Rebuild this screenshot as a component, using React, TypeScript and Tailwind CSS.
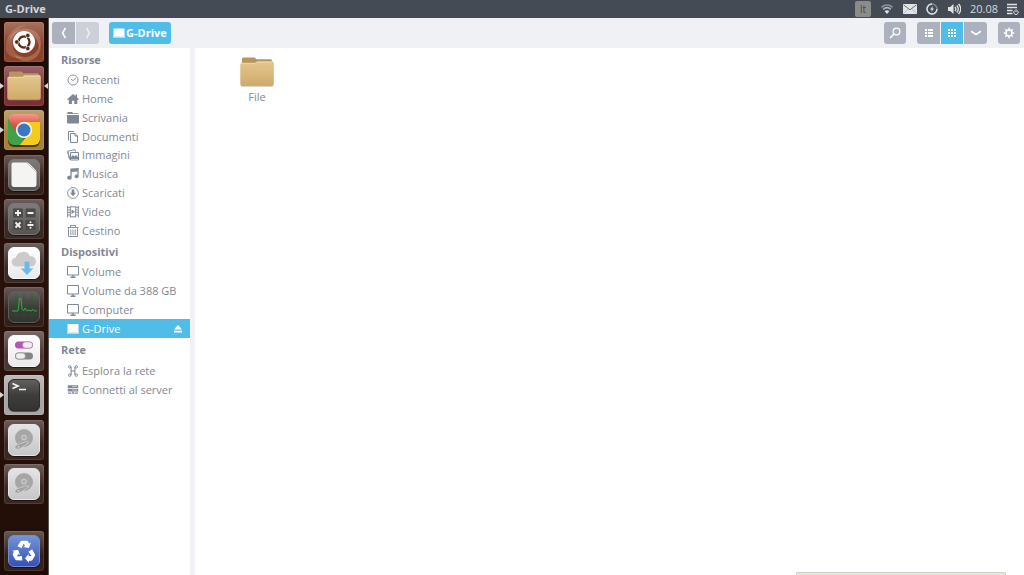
import { useState } from 'react';
import type { ReactNode } from 'react';

interface LauncherItem {
  label: string;
  tile: string;
  icon: ReactNode;
  running?: boolean;
  focused?: boolean;
}

interface Place {
  label: string;
  icon: ReactNode;
  ejectable?: boolean;
}

/* ---------- Shared drawings ---------- */

function Folder({ className }: { className?: string }) {
  return (
    <svg viewBox="0 0 36 32" className={className} aria-hidden="true">
      <defs>
        <linearGradient id="folder-front" x1="0" y1="0" x2="0" y2="1">
          <stop offset="0" stopColor="#e3c78f" />
          <stop offset="1" stopColor="#ceaa69" />
        </linearGradient>
      </defs>
      <path d="M3 30.500h30a2 2 0 0 0 1.500-1.500H1.500A2 2 0 0 0 3 30.500z" fill="#8d7b5c" opacity=".6" />
      <path d="M3 8V3.200C3 2 3.600 1.500 4.600 1.500h10.500c1 0 1.700.6 2 1.700h14.300c1 0 1.600.6 1.600 1.600V10H3z" fill="#b9955c" />
      <path d="M1.300 8.500c0-1.200.6-1.800 1.700-1.800h12.500c1.500 0 2-1.400 3.400-1.400H33c1.200 0 1.800.6 1.800 1.700v20.800c0 1.200-.7 1.900-1.900 1.900H3.200c-1.200 0-1.900-.7-1.900-1.900z" fill="url(#folder-front)" />
      <path d="M2 7.600h14.200c1.200 0 1.800-1.400 3-1.400H34" stroke="#f0dcae" strokeWidth=".7" fill="none" />
    </svg>
  );
}

function Plate({ fill, stroke = '#00000055' }: { fill: string; stroke?: string }) {
  return (
    <>
      <rect x="4" y="5" width="32" height="32" rx="6" fill="#000" opacity=".5" />
      <rect x="4.500" y="4.500" width="31" height="31" rx="5.500" fill={fill} stroke={stroke} />
    </>
  );
}

function LauncherSvg({ children }: { children: ReactNode }) {
  return (
    <svg viewBox="0 0 40 40" className="size-10" aria-hidden="true">
      {children}
    </svg>
  );
}

function LauncherGradients() {
  return (
    <svg className="absolute size-0" aria-hidden="true">
      <defs>
        <linearGradient id="plate-light" x1="0" y1="0" x2="0" y2="1">
          <stop offset="0" stopColor="#ffffff" />
          <stop offset="1" stopColor="#e9e9e9" />
        </linearGradient>
        <linearGradient id="plate-silver" x1="0" y1="0" x2="0" y2="1">
          <stop offset="0" stopColor="#e4e4e4" />
          <stop offset="1" stopColor="#c6c6c6" />
        </linearGradient>
        <linearGradient id="plate-gray" x1="0" y1="0" x2="0" y2="1">
          <stop offset="0" stopColor="#7d7c7b" />
          <stop offset="1" stopColor="#565554" />
        </linearGradient>
        <linearGradient id="plate-dark" x1="0" y1="0" x2="0" y2="1">
          <stop offset="0" stopColor="#62625f" />
          <stop offset=".5" stopColor="#3d3d3b" />
          <stop offset="1" stopColor="#333332" />
        </linearGradient>
        <linearGradient id="plate-blue" x1="0" y1="0" x2="0" y2="1">
          <stop offset="0" stopColor="#7397d8" />
          <stop offset="1" stopColor="#3550b4" />
        </linearGradient>
      </defs>
    </svg>
  );
}

function Disk() {
  return (
    <LauncherSvg>
      <Plate fill="url(#plate-silver)" stroke="#e6e6e6" />
      <circle cx="20" cy="18" r="9" fill="#a6a6a6" />
      <circle cx="20" cy="17.500" r="2.500" fill="#b0b0b0" stroke="#d0d0d0" />
      <path d="M11.500 26c2-2.500 6-2 9-3.800 1.800-.9 3.600-.8 4.500.5-3 1.300-7 5.300-10 6.300-3 .8-5-1-3.500-3z" fill="#a0a0a0" stroke="#d0d0d0" strokeWidth=".8" />
      <circle cx="14.500" cy="26.800" r="1" fill="#d0d0d0" />
    </LauncherSvg>
  );
}

const launcherItems: LauncherItem[] = [
  {
    label: 'Dash',
    tile: 'bg-[#8a4228]',
    icon: (
      <LauncherSvg>
        <g fill="#f0c6b4">
          <path d="M5 20C6 9 20 2 32 10c5 4 6 11 3 17 0-9-6-17-15-18-7 0-13 5-15 11z" opacity=".28" />
          <path d="M2 28C1 14 9 4 22 3 12 7 7 15 9 26c2 6 7 9 12 9-8 3-17 0-19-7z" opacity=".22" />
          <path d="M10 33c12 6 25 0 26-13 3 10-4 19-14 19-5 0-9-2-12-6z" opacity=".28" />
        </g>
        <circle cx="20" cy="20" r="11" fill="#fff" />
        <circle cx="20" cy="20" r="5.500" fill="none" stroke="#5b2a1b" strokeWidth="2.400" />
        <path d="M20 20 11.500 20M20 20l4.500-7.800M20 20l4.500 7.800" stroke="#fff" strokeWidth="1.200" />
        <circle cx="20" cy="20" r="4.200" fill="#fff" />
        <g fill="#5b2a1b" stroke="#fff" strokeWidth=".6">
          <circle cx="12.800" cy="20" r="2.200" />
          <circle cx="23.800" cy="13.500" r="2.200" />
          <circle cx="23.800" cy="26.500" r="2.200" />
        </g>
      </LauncherSvg>
    ),
  },
  {
    label: 'File',
    tile: 'bg-[#7a3038]',
    running: true,
    focused: true,
    icon: <Folder className="h-8 w-9" />,
  },
  {
    label: 'Google Chrome',
    tile: 'bg-[#a5823c]',
    running: true,
    icon: (
      <LauncherSvg>
        <defs>
          <clipPath id="chrome-clip">
            <rect x="4" y="4" width="32" height="31" rx="6" />
          </clipPath>
          <linearGradient id="chrome-red" x1="0" y1="0" x2="0" y2="1">
            <stop offset="0" stopColor="#f39a8c" />
            <stop offset=".5" stopColor="#e2564a" />
            <stop offset="1" stopColor="#d8382c" />
          </linearGradient>
        </defs>
        <rect x="4" y="5" width="32" height="32" rx="6" fill="#4b3514" />
        <g clipPath="url(#chrome-clip)">
          <path d="M4 4h32v9H20l-8 11L4 9z" fill="url(#chrome-red)" />
          <path d="M4 9l9 15 7 5-4 7H4z" fill="#3fa249" />
          <path d="M20 12h16v24H15l11-14z" fill="#f6cc1a" />
        </g>
        <circle cx="20" cy="20" r="8.200" fill="#f3f3ef" />
        <circle cx="20" cy="20" r="6.500" fill="#3b78c2" />
      </LauncherSvg>
    ),
  },
  {
    label: 'LibreOffice',
    tile: 'bg-[#35211c]',
    icon: (
      <LauncherSvg>
        <Plate fill="url(#plate-gray)" stroke="#7a7877" />
        <path d="M9.500 7.500h13c1 0 2 .5 2.600 1.100l6.500 6.500c.6.600.9 1.400.9 2.200v12.200c0 1.700-1 2.500-2.500 2.500H10c-1.500 0-2.500-1-2.500-2.500v-20c0-1.300.7-2 2-2z" fill="#f4f4f3" />
        <path d="M22.500 7.500l10 10z" stroke="#bbb" strokeWidth=".5" />
      </LauncherSvg>
    ),
  },
  {
    label: 'Calcolatrice',
    tile: 'bg-[#3b2b27]',
    icon: (
      <LauncherSvg>
        <Plate fill="url(#plate-gray)" stroke="#7a7877" />
        <g fill="#4c4b4a">
          <rect x="9" y="9.500" width="10" height="9" rx="1" />
          <rect x="21.500" y="9.500" width="10" height="9" rx="1" />
          <rect x="9" y="21" width="10" height="10" rx="1" />
          <rect x="21.500" y="21" width="10" height="10" rx="1" />
        </g>
        <g stroke="#f2f2f2" strokeWidth="1.800" fill="none">
          <path d="M11 14h6M14 11v6M23.500 14h6M11.500 23.500l5 5M16.500 23.500l-5 5M23.500 26h6" />
        </g>
        <circle cx="26.500" cy="23.200" r="1" fill="#f2f2f2" />
        <circle cx="26.500" cy="28.800" r="1" fill="#f2f2f2" />
      </LauncherSvg>
    ),
  },
  {
    label: 'Download',
    tile: 'bg-[#3b2b27]',
    icon: (
      <LauncherSvg>
        <Plate fill="url(#plate-light)" stroke="#f8f8f8" />
        <path d="M12.500 23.500a4.500 4.500 0 0 1-.6-9A7.500 7.500 0 0 1 26 13.300a5 5 0 0 1 5.900 5.200 4.600 4.600 0 0 1-4 5z" fill="#cbcbcb" />
        <path d="M20.500 18.500h5v7h3.500L23 32l-6-6.500h3.500z" fill="#70b8e8" stroke="#9bcdee" strokeWidth=".6" />
      </LauncherSvg>
    ),
  },
  {
    label: 'Monitor di sistema',
    tile: 'bg-[#35211c]',
    icon: (
      <LauncherSvg>
        <Plate fill="url(#plate-dark)" stroke="#5c5c59" />
        <path d="M6 14h28M6 20h28M6 28h28M12 6v28M20 6v28M28 6v28" stroke="#265a2b" strokeWidth=".4" />
        <path d="M8 24h6l1.500-12.500h1.500l1 11 2 1 1-2.500 2 3 2-1 2 1 2-1.500 2 1.500h2" fill="none" stroke="#3ca843" strokeWidth="1" />
      </LauncherSvg>
    ),
  },
  {
    label: 'Tweak Tool',
    tile: 'bg-[#4a3833]',
    icon: (
      <LauncherSvg>
        <Plate fill="url(#plate-light)" stroke="#f8f8f8" />
        <rect x="11" y="10.500" width="18" height="7" rx="3.500" fill="#b455b0" />
        <rect x="18.500" y="11" width="10" height="6" rx="3" fill="#f1eef1" stroke="#a87aa6" strokeWidth=".5" />
        <rect x="11" y="21.500" width="18" height="7" rx="3.500" fill="#858585" />
        <rect x="11.500" y="22" width="10" height="6" rx="3" fill="#eee" stroke="#777" strokeWidth=".5" />
      </LauncherSvg>
    ),
  },
  {
    label: 'Terminale',
    tile: 'bg-[#aaa5a5]',
    running: true,
    icon: (
      <LauncherSvg>
        <Plate fill="url(#plate-dark)" stroke="#2c2c2c" />
        <path d="M8.500 8.500l5.500 2.500-5.500 2.500M15 14.500h7" fill="none" stroke="#f4f4f4" strokeWidth="1.700" />
      </LauncherSvg>
    ),
  },
  { label: 'Disco 1', tile: 'bg-[#3b2723]', icon: <Disk /> },
  { label: 'Disco 2', tile: 'bg-[#3b2723]', icon: <Disk /> },
];

const trashItem: LauncherItem = {
  label: 'Cestino',
  tile: 'bg-[#35211c]',
  icon: (
    <LauncherSvg>
      <Plate fill="url(#plate-blue)" stroke="#6f8fce" />
      {/* one arrow, turned three times */}
      {[0, 120, 240].map((angle) => (
        <g key={angle} transform={`rotate(${angle} 20 21)`} fill="#fff">
          <path d="M13.500 15.300l2.800-4.600c.5-.8 1-1 1.800-1h4.400c.8 0 1.300.3 1.700 1l1 1.700 1.700-1-1.900 5.600-5.700-1 1.800-1-1.500-2.500-2 4.800z" />
        </g>
      ))}
    </LauncherSvg>
  ),
};

/* ---------- Places icons ---------- */

function PlaceSvg({ children }: { children: ReactNode }) {
  return (
    <svg viewBox="0 0 12 12" className="size-3 shrink-0" fill="none" stroke="currentColor" aria-hidden="true">
      {children}
    </svg>
  );
}

const monitorIcon = (
  <PlaceSvg>
    <path d="M.5.500h11v8.500H.5z" />
    <path d="M3.500 11.300h5M6 9v2" strokeWidth="1.400" />
  </PlaceSvg>
);

const sections: { title: string; list: string; places: Place[] }[] = [
  {
    title: 'Risorse',
    list: 'h-[169px]',
    places: [
      {
        label: 'Recenti',
        icon: (
          <PlaceSvg>
            <circle cx="6" cy="6" r="5" strokeWidth=".9" />
            <path d="M3.800 5L6 6.600 8.800 4.200" strokeWidth=".9" />
          </PlaceSvg>
        ),
      },
      {
        label: 'Home',
        icon: (
          <PlaceSvg>
            <path d="M6 1l2.500 2V1.500H10v2.800L12 6.200l-.6.600H10.300V11H7.300V7.800H4.900V11H1.800V6.800H.6L0 6.200z" fill="currentColor" stroke="none" />
          </PlaceSvg>
        ),
      },
      {
        label: 'Scrivania',
        icon: (
          <PlaceSvg>
            <path d="M0 3h12v7.500c0 .6-.4 1-1 1H1c-.6 0-1-.4-1-1zM1 0h4.200l.8 1.200h5c.4 0 .7.300.7.900H.4V.800C.4.300.6 0 1 0z" fill="currentColor" stroke="none" />
          </PlaceSvg>
        ),
      },
      {
        label: 'Documenti',
        icon: (
          <PlaceSvg>
            <path d="M3.500 2.500h4.500l2.500 2.500v6.500h-7zM8 2.500V5h2.500" />
            <path d="M1.500 9.500v-9H7" />
          </PlaceSvg>
        ),
      },
      {
        label: 'Immagini',
        icon: (
          <PlaceSvg>
            <path d="M3.500 3.500h8v7.500h-8z" />
            <path d="M2.500 9.500L.5 2.300 8 .6l.5 2M1 3l1.500 7.500" />
            <path d="M4 10V8l2-2 1.500 1.500L9 6l2 2v2z" fill="currentColor" stroke="none" />
          </PlaceSvg>
        ),
      },
      {
        label: 'Musica',
        icon: (
          <PlaceSvg>
            <path d="M3.500.800L11.500 0v8.200a1.900 1.700 0 1 1-1-1.300V3.200l-6 .7v5.700a2.100 1.800 0 1 1-1-1.400z" fill="currentColor" stroke="currentColor" strokeWidth=".3" />
          </PlaceSvg>
        ),
      },
      {
        label: 'Scaricati',
        icon: (
          <PlaceSvg>
            <circle cx="6" cy="6" r="5.400" strokeWidth=".9" />
            <path d="M4.700 2.500h2.600v3.300H9L6 9.200 3 5.800h1.700z" fill="currentColor" stroke="none" />
          </PlaceSvg>
        ),
      },
      {
        label: 'Video',
        icon: (
          <PlaceSvg>
            <path d="M.7 0v11.500M11.300 0v11.500M3.300.500v10.800M8.700.500v10.800M3 .800h6M3 10.800h6" />
            <path d="M.5 1.500h2.800M.5 4h2.800M.5 6.500h2.800M.5 9h2.800M8.700 1.500h2.600M8.700 4h2.600M8.700 6.500h2.600M8.700 9h2.600" strokeWidth=".8" />
            <path d="M4.500 3.500v4.500L8 5.800z" fill="currentColor" stroke="none" />
          </PlaceSvg>
        ),
      },
      {
        label: 'Cestino',
        icon: (
          <PlaceSvg>
            <path d="M.5 2.500h11M3.500 2.500v-2h5v2M1.500 2.500v9h9v-9M3.800 4.500v5.500M6 4.500v5.500M8.200 4.500v5.500" strokeWidth=".9" />
          </PlaceSvg>
        ),
      },
    ],
  },
  {
    title: 'Dispositivi',
    list: 'h-[75px]',
    places: [
      { label: 'Volume', icon: monitorIcon },
      { label: 'Volume da 388 GB', icon: monitorIcon },
      { label: 'Computer', icon: monitorIcon },
      {
        label: 'G-Drive',
        ejectable: true,
        icon: (
          <PlaceSvg>
            <path d="M.5 1h11v8H.5zM0 9.200h12v1.300H0z" fill="currentColor" stroke="none" />
          </PlaceSvg>
        ),
      },
    ],
  },
  {
    title: 'Rete',
    list: 'h-[38px]',
    places: [
      {
        label: 'Esplora la rete',
        icon: (
          <PlaceSvg>
            <circle cx="2.700" cy="1.800" r="1.200" />
            <circle cx="9.300" cy="1.800" r="1.200" />
            <circle cx="2.700" cy="10.200" r="1.200" />
            <circle cx="9.300" cy="10.200" r="1.200" />
            <path d="M4.100 2v8M7.900 2v8M4.100 6h3.800" strokeWidth="1.100" />
          </PlaceSvg>
        ),
      },
      {
        label: 'Connetti al server',
        icon: (
          <PlaceSvg>
            <path d="M.8 1.200h10.400v2.800H.8zM.8 4.700h10.400v2.800H.8z" fill="currentColor" stroke="none" />
            <path d="M5 2.600h5M5 6.100h5" stroke="#fff" strokeWidth=".5" />
            <path d="M1 9.200h3.200M7.800 9.200H11M4.800 9.200h2.400M6 7.500v2" strokeWidth="1.300" />
          </PlaceSvg>
        ),
      },
    ],
  },
];

/* ---------- Page parts ---------- */

function TopBar() {
  return (
    <header className="flex h-[18px] shrink-0 items-center justify-between bg-[#454b55] px-[5px] text-[#d5d8dd]">
      <h1 className="text-[11px] leading-4 font-bold">G-Drive</h1>
      <div className="flex items-center gap-[9px]">
        <button className="flex h-4 w-4 items-center justify-center rounded-[2px] bg-[#8b8b89] text-[10px] leading-4 text-[#4b4b4b]">
          lt
        </button>
        <button aria-label="Rete">
          <svg viewBox="0 0 14 12" className="h-3 w-3.5" fill="none" aria-hidden="true">
            <path d="M1.500 4.300c3.300-3 7.700-3 11 0" stroke="#8f949c" strokeWidth="1.600" />
            <path d="M3.200 6.300c2.300-2 5.300-2 7.600 0" stroke="#b5b8be" strokeWidth="1.600" />
            <path d="M4.600 8.200c1.500-1.200 3.300-1.200 4.800 0L7 11z" fill="#dfe1e4" />
          </svg>
        </button>
        <button aria-label="Posta">
          <svg viewBox="0 0 14 10" className="h-2.5 w-3.5" aria-hidden="true">
            <path d="M0 0h14v10H0z" fill="#e2e3e5" />
            <path d="M.5.800L7 5.800 13.500.800" fill="none" stroke="#5b6069" strokeWidth=".9" />
            <path d="M.5 9.500L5 5M13.500 9.500L9 5" fill="none" stroke="#a2a5aa" strokeWidth=".6" />
          </svg>
        </button>
        <button aria-label="Batteria">
          <svg viewBox="0 0 12 12" className="size-3" fill="none" aria-hidden="true">
            <circle cx="6" cy="6" r="5" stroke="#888d95" strokeWidth="1.300" />
            <path d="M6 1a5 5 0 1 0 5 5" stroke="#dfe1e4" strokeWidth="1.400" />
            <path d="M6.800 3L4 6.400h1.800L5.200 9l2.800-3.600H6.300z" fill="#dfe1e4" />
          </svg>
        </button>
        <button aria-label="Volume">
          <svg viewBox="0 0 14 12" className="h-3 w-3.5" fill="none" stroke="#e2e3e5" aria-hidden="true">
            <path d="M1 4h2.200L6.500 1v10L3.200 8H1z" fill="#e2e3e5" stroke="none" />
            <path d="M8 4c1 1.200 1 2.800 0 4M9.800 2.500c1.900 2.200 1.900 4.800 0 7M11.600 1c2.600 3 2.600 7 0 10" strokeWidth="1.300" />
          </svg>
        </button>
        <time className="text-[11px] leading-4">20.08</time>
        <button aria-label="Sessione">
          <svg viewBox="0 0 12 12" className="size-3" fill="none" stroke="#e2e3e5" aria-hidden="true">
            <path d="M0 1.500h10M0 4.500h10M0 7.500h5.500M0 10.500h5.500" strokeWidth="1.300" />
            <path d="M7.600 7.600a2.200 2.200 0 1 0 2.800 0M9 6.200v2.800" strokeWidth="1" />
          </svg>
        </button>
      </div>
    </header>
  );
}

function LauncherButton({ item }: { item: LauncherItem }) {
  return (
    <button aria-label={item.label} className="relative flex h-10 w-12 items-center justify-center">
      {item.running && (
        <span className="absolute left-0 border-y-3 border-l-4 border-y-transparent border-l-[#d8d8d8]" />
      )}
      <span
        className={`flex size-10 items-center justify-center overflow-hidden rounded-[3px] bg-linear-to-b from-white/25 to-transparent to-60% inset-ring inset-ring-white/10 ${item.tile}`}
      >
        {item.icon}
      </span>
      {item.focused && (
        <span className="absolute right-0 border-y-3 border-r-4 border-y-transparent border-r-[#d8d8d8]" />
      )}
    </button>
  );
}

function Launcher() {
  return (
    <nav
      aria-label="Launcher"
      className="flex w-[49px] shrink-0 flex-col justify-between border-r border-[#5b5552] bg-linear-to-b from-[#1d0b04] via-[#2b120c] via-60% to-[#1f0d05] pt-1 pb-1"
    >
      <LauncherGradients />
      <div className="grid h-[486px] auto-rows-fr">
        {launcherItems.map((item) => (
          <LauncherButton key={item.label} item={item} />
        ))}
      </div>
      <LauncherButton item={trashItem} />
    </nav>
  );
}

const toolButton = 'flex h-[22px] items-center justify-center text-white';

function Toolbar() {
  const [view, setView] = useState('grid');

  return (
    <div className="flex h-[30px] shrink-0 items-center justify-between bg-[#f0f1f5] pr-1 pl-[3px]">
      <div className="flex items-center gap-[10px]">
        <div className="flex gap-px">
          <button aria-label="Indietro" className={`${toolButton} w-[23px] rounded-l-[3px] bg-[#abb1bd]`}>
            <svg viewBox="0 0 6 12" className="h-3 w-1.5" fill="none" stroke="currentColor" strokeWidth="1.500" aria-hidden="true">
              <path d="M4.500 1L1.500 6l3 5" />
            </svg>
          </button>
          <button aria-label="Avanti" className={`${toolButton} w-[23px] rounded-r-[3px] bg-[#cdd0d8]`}>
            <svg viewBox="0 0 6 12" className="h-3 w-1.5" fill="none" stroke="#eceef2" strokeWidth="1.500" aria-hidden="true">
              <path d="M1.500 1l3 5-3 5" />
            </svg>
          </button>
        </div>
        <button className={`${toolButton} gap-px rounded-[3px] bg-[#4fbde7] px-1 text-[11px] leading-4 font-bold`}>
          <svg viewBox="0 0 12 10" className="h-2.5 w-3" aria-hidden="true">
            <path d="M.5.500h11V8H.5zM0 8.200h12v1.300H0z" fill="currentColor" />
          </svg>
          G-Drive
        </button>
      </div>
      <div className="flex items-center gap-[11px]">
        <button aria-label="Cerca" className={`${toolButton} w-[22px] rounded-[3px] bg-[#abb1bd]`}>
          <svg viewBox="0 0 12 12" className="size-3" fill="none" stroke="currentColor" aria-hidden="true">
            <circle cx="7.500" cy="4.500" r="3.400" strokeWidth="1.200" />
            <path d="M5 7L1 11" strokeWidth="1.600" />
          </svg>
        </button>
        <div className="flex gap-px">
          <button
            aria-label="Elenco"
            onClick={() => setView('list')}
            className={`${toolButton} w-[23px] rounded-l-[3px] ${view === 'list' ? 'bg-[#4fbde7]' : 'bg-[#abb1bd]'}`}
          >
            <svg viewBox="0 0 8 8" className="size-2" stroke="currentColor" strokeWidth="2" aria-hidden="true">
              <path d="M0 1h2M3 1h5M0 4h2M3 4h5M0 7h2M3 7h5" />
            </svg>
          </button>
          <button
            aria-label="Icone"
            onClick={() => setView('grid')}
            className={`${toolButton} w-[22px] ${view === 'grid' ? 'bg-[#4fbde7]' : 'bg-[#abb1bd]'}`}
          >
            <svg viewBox="0 0 8 8" className="size-2" stroke="currentColor" strokeWidth="2" aria-hidden="true">
              <path d="M0 1h2M3 1h2M6 1h2M0 4h2M3 4h2M6 4h2M0 7h2M3 7h2M6 7h2" />
            </svg>
          </button>
          <button aria-label="Opzioni di vista" className={`${toolButton} w-[23px] rounded-r-[3px] bg-[#abb1bd]`}>
            <svg viewBox="0 0 12 6" className="h-1.5 w-3" fill="none" stroke="currentColor" strokeWidth="1.700" aria-hidden="true">
              <path d="M1 1.200L6 4.500l5-3.300" />
            </svg>
          </button>
        </div>
        <button aria-label="Impostazioni" className={`${toolButton} w-[22px] rounded-[3px] bg-[#abb1bd]`}>
          <svg viewBox="0 0 12 12" className="size-3" fill="none" stroke="currentColor" aria-hidden="true">
            <circle cx="6" cy="6" r="3" strokeWidth="1.500" />
            <path d="M6 .8v2M6 9.200v2M.8 6h2M9.200 6h2M2.300 2.300l1.400 1.400M8.300 8.300l1.400 1.400M9.700 2.300L8.300 3.700M3.700 8.300L2.300 9.700" strokeWidth="1.600" />
          </svg>
        </button>
      </div>
    </div>
  );
}

function Places() {
  const [current, setCurrent] = useState('G-Drive');

  return (
    <aside className="w-[146px] shrink-0 border-r-5 border-[#f0f1f5] text-[11px] leading-4 text-[#7f8896]">
      {sections.map((section) => (
        <section key={section.title}>
          <h2 className="flex h-[23px] items-center pl-3 font-bold">{section.title}</h2>
          <ul className={`grid auto-rows-fr ${section.list}`}>
            {section.places.map((place) => (
              <li key={place.label} className={`flex ${place.label === current ? 'bg-[#4fbde7] text-white' : ''}`}>
                <button
                  onClick={() => setCurrent(place.label)}
                  className="flex flex-1 items-center gap-[3px] pl-[18px] text-left whitespace-nowrap"
                >
                  {place.icon}
                  {place.label}
                </button>
                {place.ejectable && (
                  <button aria-label="Espelli" className="pr-2">
                    <svg viewBox="0 0 8 8" className="size-2" fill="currentColor" aria-hidden="true">
                      <path d="M4 0l4 4.500H0zM0 5.800h8v1.700H0z" />
                    </svg>
                  </button>
                )}
              </li>
            ))}
          </ul>
        </section>
      ))}
    </aside>
  );
}

export default function App() {
  return (
    <div className="flex h-screen flex-col overflow-hidden bg-white font-['Open_Sans','Noto_Sans',sans-serif]">
      <TopBar />
      <div className="flex min-h-0 flex-1">
        <Launcher />
        <div className="flex min-w-0 flex-1 flex-col">
          <Toolbar />
          <div className="flex min-h-0 flex-1">
            <Places />
            <main className="relative flex-1 px-8 py-2">
              <button className="flex w-[60px] flex-col items-center gap-px text-[11px] leading-4 text-[#7f8896]">
                <Folder className="h-8 w-9" />
                File
              </button>
              {/* floating status bar, mostly below the window edge */}
              <div className="absolute right-[18px] bottom-0 h-[3px] w-[210px] rounded-t-[2px] border border-b-0 border-[#cfcfca] bg-[#e6e6e1]" />
            </main>
          </div>
        </div>
      </div>
    </div>
  );
}
